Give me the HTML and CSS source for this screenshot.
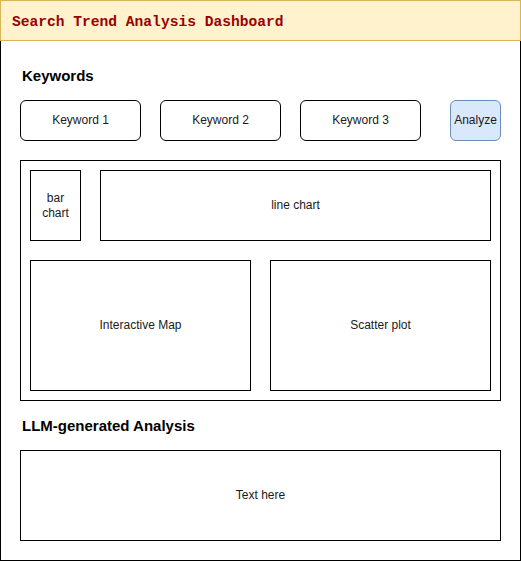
FILE: index.html
```html
<!DOCTYPE html>
<html>
<head>
<meta charset="utf-8">
<link rel="stylesheet" href="styles.css">
</head>
<body>
<div class="page">
  <header class="titlebar">Search Trend Analysis Dashboard</header>
  <main class="frame">
    <h2 class="section-title kw-title">Keywords</h2>
    <div class="keyword-row">
      <div class="box rounded kw">Keyword 1</div>
      <div class="box rounded kw">Keyword 2</div>
      <div class="box rounded kw">Keyword 3</div>
      <div class="box rounded analyze">Analyze</div>
    </div>
    <section class="charts">
      <div class="chart-row top">
        <div class="box bar">bar<br>chart</div>
        <div class="box line">line chart</div>
      </div>
      <div class="chart-row bottom">
        <div class="box map">Interactive Map</div>
        <div class="box scatter">Scatter plot</div>
      </div>
    </section>
    <h2 class="section-title llm-title">LLM-generated Analysis</h2>
    <div class="box textbox">Text here</div>
  </main>
</div>
</body>
</html>
```

FILE: styles.css
```css
* { box-sizing: border-box; }
html, body { margin: 0; padding: 0; background: #ffffff; }
body { font-family: "Liberation Sans", Arial, sans-serif; font-size: 12px; color: #1a1a1a; }

.page { width: 521px; }

.titlebar {
  height: 41px;
  background: #fff2cc;
  border: 1px solid #d6b656;
  font-family: "Liberation Mono", "Courier New", monospace;
  font-weight: bold;
  font-size: 14.6px;
  color: #990000;
  display: flex;
  align-items: center;
  padding-left: 11px;
  padding-top: 3px;
}

.frame {
  height: 520px;
  border: 1px solid #000;
  border-top: none;
  padding: 0 19px;
  display: flex;
  flex-direction: column;
}

.section-title {
  margin: 0;
  font-size: 15px;
  font-weight: bold;
  line-height: 20px;
  height: 20px;
  color: #000;
  padding-left: 2px;
}
.kw-title { margin-top: 25px; margin-bottom: 14px; }
.llm-title { margin-top: 15px; margin-bottom: 14px; }

.box {
  border: 1px solid #000;
  background: #fff;
  display: flex;
  align-items: center;
  justify-content: center;
  text-align: center;
  line-height: 15px;
}
.rounded { border-radius: 6px; }

.keyword-row { display: flex; height: 41px; }
.kw { width: 121px; margin-right: 19px; }
.kw:nth-child(3) { margin-right: 29px; }
.analyze {
  width: 51px;
  background: #dae8fc;
  border-color: #6c8ebf;
}

.charts {
  margin-top: 19px;
  width: 481px;
  height: 241px;
  border: 1px solid #000;
  padding: 9px;
  display: flex;
  flex-direction: column;
  gap: 19px;
}
.chart-row { display: flex; gap: 19px; }
.chart-row.top { height: 71px; }
.chart-row.bottom { height: 131px; }
.bar { width: 51px; }
.line { width: 391px; }
.map, .scatter { width: 221px; }

.textbox { width: 481px; height: 91px; }
```
